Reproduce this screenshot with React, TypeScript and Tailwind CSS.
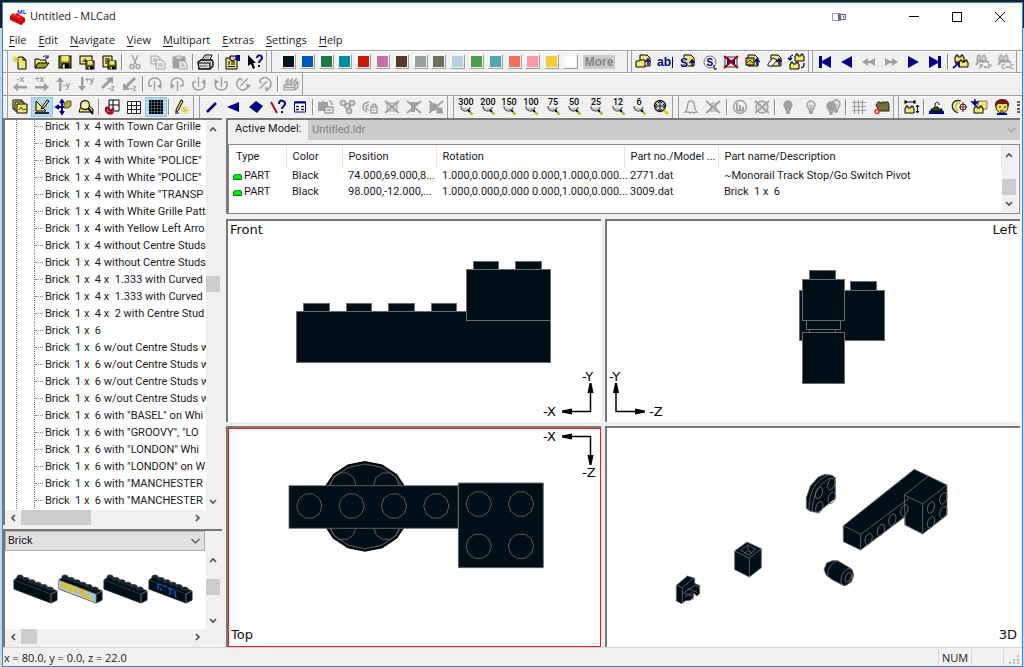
import React from 'react';

const NAVY = '#000080';
const OFF = '#a0a0a0';
const YEL = '#f0e678';
const INK = '#000f17';
const EDGE = '#6a6a6a';

const ring = (cx: number, cy: number, r: number, n: number) =>
  Array.from({ length: n }, (_, i) => {
    const a = (i / n) * Math.PI * 2;
    return `${(cx + r * Math.cos(a)).toFixed(1)},${(cy + r * Math.sin(a)).toFixed(1)}`;
  }).join(' ');

const Sheet = ({ x = 2, y = 2 }: { x?: number; y?: number }) => (
  <path d={`M${x} ${y}h7l3 3v8h-10z`} fill={YEL} stroke="#000" />
);
const Floppy = ({ x = 2, y = 2, s = 12 }: { x?: number; y?: number; s?: number }) => (
  <g>
    <rect x={x} y={y} width={s} height={s} fill="#808000" stroke="#000" />
    <rect x={x + s * 0.2} y={y} width={s * 0.6} height={s * 0.45} fill={YEL} />
    <rect x={x + s * 0.2} y={y + s * 0.6} width={s * 0.65} height={s * 0.4} fill="#000" />
    <rect x={x + s * 0.3} y={y + s * 0.7} width={s * 0.18} height={s * 0.3} fill="#ddd" />
  </g>
);
const Block = ({ x, y, c = YEL, k = '#000' }: { x: number; y: number; c?: string; k?: string }) => (
  <path d={`M${x} ${y + 2}h1v-2h2v2h3v-2h2v2h1v5h-9z`} fill={c} stroke={k} />
);
const Up = ({ x, y }: { x: number; y: number }) => (
  <path d={`M${x} ${y + 7}v-6m-2.5 3l2.5-3 2.5 3`} fill="none" stroke={NAVY} strokeWidth={1.5} />
);
const Cross = ({ c = OFF }: { c?: string }) => (
  <path d="M1 2l14 12M15 2l-14 12" stroke={c} strokeWidth={1.7} />
);
const Arrow = ({ d, t, tx, ty }: { d: string; t: string; tx: number; ty: number }) => (
  <g>
    <path d={d} fill={OFF} />
    <text x={tx} y={ty} fontSize={8} fontWeight={700} fill={OFF}>{t}</text>
  </g>
);
const Orbit = ({ a, flip = false }: { a: number; flip?: boolean }) => (
  <g transform={`rotate(${a} 8 8)`}>
    <g transform={flip ? 'translate(16 0) scale(-1 1)' : undefined} stroke={OFF} fill="none">
      <path d="M2 10C1 4 4 2 8 2s7 3 5 8" strokeWidth={1.5} />
      <path d="M15 8l-1 5-4-3z" fill={OFF} stroke="none" />
      <path d="M2 10h3" strokeWidth={1.5} />
      <path d="M7.500 5v10" strokeWidth={1.4} />
    </g>
  </g>
);
const Bulb = ({ x = 0, y = 0, open = false }: { x?: number; y?: number; open?: boolean }) => (
  <g transform={`translate(${x} ${y})`}>
    <path d="M4 6a4 4 0 0 1 8 0c0 2-2 3-2 5H6c0-2-2-3-2-5z" fill={open ? '#e4e4e4' : OFF} stroke={OFF} strokeWidth={1.4} />
    <path d="M6 12h4v2l-1 1h-2l-1-1z" fill={OFF} />
    {open && <path d="M6 6l2 2 2-2M8 8v4" stroke={OFF} fill="none" />}
  </g>
);
const ZoomNo = ({ n }: { n: string }) => (
  <g>
    <path d="M3 7a4.500 4.500 0 0 0 9 1" fill="#e8e8e8" stroke="#555" strokeWidth={1.2} />
    <path d="M4 10h6" stroke="#999" />
    <path d="M10 11l2 2" stroke="#000" strokeWidth={2} />
    <path d="M12 13l2.500 2.500" stroke="#b5ad00" strokeWidth={2.2} />
    <text x="8" y="6" fontSize={9} fontWeight={500} textAnchor="middle" fill="#000" fontFamily="Roboto">{n}</text>
  </g>
);

const ART: Record<string, React.ReactNode> = {
  fresh: <><path d="M6 3h5l3 3v9H6z" fill={YEL} stroke="#000" /><path d="M11 3v3h3" fill="none" stroke="#000" /><path d="M4 1v8M0 5h8M1 2l6 6M7 2L1 8" stroke="#d6cb20" /></>,
  open: <><path d="M1 14V5h4l1 1h6v3" fill={YEL} stroke="#000" /><path d="M1 14l3-5h11l-4 5z" fill="#a39c2d" stroke="#000" /><path d="M9 3c2-2 4-1 5 1m0-3v3h-3" fill="none" stroke={NAVY} /></>,
  save: <Floppy />,
  savePic: <><rect x="1" y="2" width="12" height="8" fill={YEL} stroke="#000" /><path d="M3 8l3-4 3 4z" fill="#557" /><Floppy x={7} y={7} s={8} /></>,
  saveList: <><path d="M2 2h9v11H2z" fill={YEL} stroke="#000" /><path d="M4 5h5M4 7h4M4 9h2" stroke="#000" /><Floppy x={7} y={7} s={8} /></>,
  cut: <g stroke={OFF} fill="none" strokeWidth={1.4}><path d="M5 1l4 9M11 1l-4 9" /><circle cx="5" cy="12.500" r="2" /><circle cx="11" cy="12.500" r="2" /></g>,
  copy: <g stroke={OFF} fill="#eee"><path d="M1 2h7l2 2v6H1z" /><path d="M6 6h6l3 3v6H6z" /><path d="M3 5h4M3 7h2M8 10h5M8 12h5" /></g>,
  paste: <g stroke={OFF}><path d="M1 3h12v11H1z" fill={OFF} /><path d="M4 2h6v3H4z" fill="#ddd" /><path d="M7 7h5l3 3v5H7z" fill="#eee" /><path d="M9 10h3M9 12h4" /></g>,
  print: <><path d="M4 6l3-5h7l-2 5" fill="#fff" stroke="#000" /><path d="M0 8l3-2h11l1 2v4l-3 3H1z" fill="#d8d8d8" stroke="#000" strokeWidth={1.3} /><path d="M0 9h12v5" stroke="#000" fill="none" strokeWidth={1.2} /><path d="M2 12h7" stroke="#555" /><path d="M9 12h2" stroke="#d6cb20" strokeWidth={1.6} /><path d="M7 3h5M6 5h5" stroke="#555" strokeWidth={0.8} /></>,
  props: <><path d="M1 4h11v11H1z" fill={YEL} stroke="#000" /><path d="M3 8h2M6 8h4M3 10h2M6 10h4M3 12.500h7" stroke="#000" /><path d="M5 2h6v3l-3 2-3-1z" fill="#ccc" stroke="#000" /><path d="M11 1h4v6h-3z" fill={NAVY} /></>,
  help: <><path d="M1 1l8 8H6l2 5-2 1-2-5-3 2z" fill="#000" /><path d="M10 4c0-4 5-3 5 0 0 2-3 2-3 5M12 11v2" stroke={NAVY} strokeWidth={2} fill="none" /></>,
  xm: <Arrow d="M1 11l5-4v3h9v2.500h-9v3z" t="-x" tx={5} ty={6} />,
  xp: <Arrow d="M15 11l-5-4v3H1v2.500h9v3z" t="+x" tx={1} ty={6} />,
  ym: <Arrow d="M4 1l4 5H5.500v9H3V6H0z" t="-y" tx={7} ty={12} />,
  yp: <Arrow d="M4 15l4-5H5.500V1H3v9H0z" t="+y" tx={7} ty={7} />,
  zm: <Arrow d="M13 1v7l-2.500-2L3 13 1 11l7-7-2-2z" t="-z" tx={8} ty={15} />,
  zp: <Arrow d="M1 14V7l2.500 2L12 1l2 2-8 8 2 3z" t="-z" tx={8} ty={15} />,
  r1: <Orbit a={0} />, r2: <Orbit a={0} flip />, r3: <Orbit a={180} flip />, r4: <Orbit a={180} />,
  r5: <Orbit a={225} flip />, r6: <Orbit a={45} />,
  grp: <g stroke={OFF} fill="#ddd" strokeWidth={1.2}><path d="M1 9h11v5H1zM12 9l3-3v5l-3 3M3 9V5l2-2v6M7 9V5l2-2v6M11 8V5l2-2v4M1 11.500h11" /></g>,
  abl: <><text x="-1" y="12" fontSize={12} fontWeight={700} fill={NAVY} fontFamily="Liberation Sans">ab</text><path d="M14.500 3v11" stroke={NAVY} /></>,
  addPart: <><Sheet x={4} y={1} /><path d="M0 7h3l1-1h5v7H0z" fill={YEL} stroke="#000" /><Up x={12} y={4} /></>,
  addS: <><Sheet x={4} y={1} /><text x="0" y="13" fontSize={12} fontWeight={700} fill={NAVY} stroke="#f0f0f0" strokeWidth={1} paintOrder="stroke" fontFamily="Liberation Sans">S</text><Up x={12} y={5} /></>,
  ringS: <><circle cx="8" cy="8" r="6" fill="#eee" stroke="#777" /><text x="4.500" y="12" fontSize={10} fontWeight={700} fill={NAVY} fontFamily="Liberation Sans">S</text><path d="M12 11v4h3" stroke="#000" fill="none" /></>,
  killS: <><rect x="2" y="3" width="12" height="10" fill="#eee" stroke="#333" /><path d="M5 10V5l6 5V5" stroke={NAVY} fill="none" strokeWidth={2} /><Cross c="#a00010" /></>,
  addPic: <><Sheet x={3} y={1} /><rect x="1" y="4" width="8" height="7" fill="#cfc43c" stroke="#000" /><path d="M2 9l3-3 3 3" fill="none" stroke="#333" /><Up x={12} y={4} /></>,
  addClear: <><Sheet x={4} y={1} /><path d="M1 10l5-6 4 2-5 6H1z" fill="#fff" stroke="#222" /><Up x={12} y={4} /></>,
  swap: <><Block x={6} y={0} /><Block x={1} y={8} /><path d="M4 1c-3 1-3 2-3 5M12 14c3-1 3-2 3-5M-1 4l2 2 2-2" stroke={NAVY} fill="none" strokeWidth={1.3} /></>,
  first: <path d="M2 2h3v5l9-5v12l-9-5v5H2z" fill={NAVY} />,
  prev: <path d="M2 8l11-6v12z" fill={NAVY} />,
  rew: <path d="M1 8l6-4v3h2l5-3v8l-5-3H7v3z" fill={OFF} />,
  fwd: <path d="M15 8l-6-4v3H7L2 4v8l5-3h2v3z" fill={OFF} />,
  next: <path d="M14 8L3 2v12z" fill={NAVY} />,
  last: <path d="M14 2h-3v5L2 2v12l9-5v5h3z" fill={NAVY} />,
  tree: <><Block x={2} y={1} /><Block x={6} y={6} /><path d="M0 14l6-5M2 9h4v4" stroke={NAVY} strokeWidth={1.700} fill="none" /></>,
  treeP: <><Block x={2} y={1} c="#ccc" k={OFF} /><path d="M1 11l4-5 4 2M10 6l4 3" stroke={OFF} fill="none" strokeWidth={2} /><text x="4" y="15" fontSize={7} fontWeight={700} fill={OFF}>P=P</text></>,
  treeC: <><Block x={2} y={1} c="#ccc" k={OFF} /><path d="M1 11l4-5 4 2M10 6l4 3" stroke={OFF} fill="none" strokeWidth={2} /><text x="4" y="15" fontSize={7} fontWeight={700} fill={OFF}>C=C</text></>,
  stack: <><path d="M1 1h9v9H1z" fill={YEL} stroke="#000" /><path d="M3 3h9v9H3z" fill={YEL} stroke="#000" /><path d="M5 5h10v9H5z" fill={YEL} stroke="#000" /><path d="M7 11l2-3 2 3 3-1" stroke="#444" fill="none" /></>,
  draw: <><path d="M2 2v10h10z" fill={YEL} stroke="#000" /><path d="M1 14h14" stroke="#000" strokeWidth={1.6} /><path d="M8 8l5-7 2 1-5 7-3 1z" fill={YEL} stroke="#000" /></>,
  move: <><path d="M6 1v14M0 8h13M4 4l2-3 2 3M4 12l2 3 2-3M3 6L0 8l3 2" stroke={NAVY} strokeWidth={1.800} fill="none" /><path d="M8 5l3-3h4v5l-3 2H8z" fill="#b3a92b" stroke="#222" strokeWidth={0.7} /></>,
  zoomPg: <><path d="M3 7l-2 6h14v-3l-4-3z" fill={YEL} stroke="#000" /><circle cx="7" cy="6" r="4.500" fill="#f6efa8" stroke="#222" strokeWidth={1.300} /><path d="M10 9l5 6" stroke="#000" strokeWidth={2} /></>,
  snapA: <><path d="M5 1h10v11H5zM9 1v11M5 6h10" fill="#fff" stroke="#000" /><path d="M3 8l4 4 3-3M3 8c-3 4 3 9 6 5" stroke="#a01020" strokeWidth={2.400} fill="none" /></>,
  grid3: <path d="M1.500 2.500h13v12h-13zM5.500 2v12M10.500 2v12M1 6.500h13M1 10.500h13" fill="#fff" stroke="#222" />,
  grid9: <><path d="M1 1h14v14H1z" fill="#000" /><path d="M3.500 1v14M6.500 1v14M9.500 1v14M12.500 1v14M1 3.500h14M1 6.500h14M1 9.500h14M1 12.500h14" stroke="#667c90" strokeWidth={0.6} /></>,
  wand: <><path d="M2 11L7 1l2 1-5 10-2 1z" fill={YEL} stroke="#000" /><path d="M1 14h4" stroke="#000" /><path d="M11 7v8M7 11h8M8 8l6 6M14 8l-6 6" stroke="#d6cb20" /></>,
  line: <path d="M3 13L12 4" stroke={NAVY} strokeWidth={2.500} />,
  tri: <path d="M1 8l12-5v10z" fill={NAVY} />,
  quad: <path d="M1 8l7-6 7 5-6 7z" fill={NAVY} />,
  opt: <><path d="M1 3l6 11" stroke="#a01020" strokeWidth={2} /><path d="M9 5c0-5 6-4 6 0 0 2-3 2-3 5M12 12v2" stroke={NAVY} strokeWidth={2} fill="none" /></>,
  dlg: <><path d="M2.500 3h11v10h-11z" fill="#fff" stroke={NAVY} /><path d="M2 3.500h12" stroke={NAVY} strokeWidth={2} /><path d="M4 7.500h3M9 7.500h3M4 10.500h3M9 10.500h3" stroke="#222" strokeWidth={1.6} /></>,
  g1: <><path d="M0 3h4l1-2 2 2h3v5H7v4H0z" fill={OFF} /><path d="M7 8h8v6H7zM9 11h4M11 2c3 0 3 2 3 4" stroke={OFF} fill="#eee" strokeWidth={1.4} /></>,
  g2: <g fill="#ddd" stroke={OFF} strokeWidth={1.700}><circle cx="3" cy="4" r="2.500" /><circle cx="12" cy="4" r="2.500" /><circle cx="7.500" cy="7" r="2.500" /><circle cx="9" cy="12" r="2.500" /></g>,
  g3: <g stroke={OFF} strokeWidth={1.500} fill="none"><path d="M7 3c-7 1-8 7-2 10M7 6c-4 1-4 4 0 5M9 8h6v6H9zM10 8c0-4 4-4 4 0M11 11h2" /></g>,
  g4: <><path d="M3 4h10v8H3z" fill="#ddd" stroke={OFF} /><Cross /></>,
  g5: <><path d="M3 3h9v3l-3 2v5H5V7z" fill={OFF} /><Cross /></>,
  g6: <><path d="M2 5h6v6H2zM9 9h5v5H9z" fill={OFF} stroke={OFF} /><Cross /></>,
  z300: <ZoomNo n="300" />, z200: <ZoomNo n="200" />, z150: <ZoomNo n="150" />, z100: <ZoomNo n="100" />,
  z75: <ZoomNo n="75" />, z50: <ZoomNo n="50" />, z25: <ZoomNo n="25" />, z12: <ZoomNo n="12" />, z6: <ZoomNo n="6" />,
  zfit: <><circle cx="7" cy="7" r="5.500" fill="#ccc" stroke="#222" strokeWidth={1.400} /><path d="M7 2v10M2 7h10M5 4l2-2 2 2M5 10l2 2 2-2M4 5L2 7l2 2M10 5l2 2-2 2" stroke="#222" fill="none" /><path d="M11 11l4 4" stroke="#d8d000" strokeWidth={2.500} /></>,
  ghost: <path d="M2 13c3-2 2-6 3-9 1-3 5-3 6 0 1 4 0 7 3 9l-3 1-2-1-2 1-2-1z" fill="#eee" stroke={OFF} strokeWidth={1.400} />,
  ghostX: <><path d="M4 12c2-3 1-6 3-8 4-2 4 4 5 8z" fill="#ddd" stroke={OFF} /><Cross /></>,
  bars: <><circle cx="8" cy="8" r="6.500" fill="#eee" stroke={OFF} strokeWidth={1.400} /><path d="M5 4v8M8 6v6M11 8v4M5 11.500h7" stroke={OFF} strokeWidth={1.800} fill="none" /></>,
  barsX: <><circle cx="8" cy="8" r="6" fill="#ddd" stroke={OFF} strokeWidth={1.400} /><Cross /></>,
  b1: <Bulb />, b2: <Bulb open />, b3: <><Bulb x={3} y={-1} open /><Bulb x={-2} y={1} /></>,
  hash: <path d="M1 3.500h14M1 7.500h14M1 11.500h14M3.500 1v14M7.500 1v14M11.500 1v14" stroke={OFF} strokeWidth={1.200} />,
  brick: <><path d="M2 6l2-3h2v1h2V3h2v1h1V3h3l1 3v6H5z" fill="#776f32" stroke="#222" /><circle cx="3" cy="12.500" r="2" fill="none" stroke="#e22" strokeWidth={1.400} /></>,
  size: <><path d="M2 3h10M2 1v4M12 1v4M4 2L2 3l2 1M10 2l2 1-2 1M14.500 6v8M13 8l1.500-2L16 8M13 12l1.500 2 1.500-2" stroke="#000" fill="none" /><Block x={2} y={7} /></>,
  ship: <><path d="M0 12h15v3H0z" fill={NAVY} /><path d="M2 12v-2h3V8h4v2h4v2z" fill="#0b6b24" stroke="#000" /><path d="M6 7c0-5 4-5 4-1" fill="none" stroke="#000" /></>,
  rot: <><path d="M10 2c-10-3-12 9-3 12" fill="none" stroke="#222" strokeWidth={1.300} /><path d="M9 4c-5 0-6 6-2 8" fill="none" stroke="#d6cb20" strokeWidth={2} /><path d="M8 8h8M12 3v10" stroke="#8b1a2a" /><circle cx="12" cy="8" r="3" fill="none" stroke="#222" /></>,
  imp: <><path d="M6 2h9v8H6z" fill={YEL} stroke="#777" /><path d="M3 0v5M0 3h6l-3 3z" stroke={NAVY} fill={NAVY} strokeWidth={1.4} /><Block x={2} y={7} /></>,
  face: <><circle cx="8" cy="8" r="6" fill="#ecd95a" stroke="#222" /><path d="M1 8C0 1 5 0 9 0s7 3 6 8l-2-3H4z" fill="#6f1818" /><path d="M5 8h2M10 8h2M6 12h4" stroke="#222" /><path d="M3 15h10" stroke={NAVY} strokeWidth={2} /></>,
  more: <path d="M1 3h3M1 6h3M1 10h3M1 13h3" stroke="#333" strokeWidth={1.500} />,
};

const Icon = ({ name }: { name: string }) => (
  <svg viewBox="0 0 16 16" className="h-4 w-4 shrink-0 overflow-visible" aria-hidden="true">{ART[name]}</svg>
);

type Item = string | null;

function Tools({ items, label, active = [] }: { items: Item[]; label: string; active?: string[] }) {
  return (
    <div role="toolbar" aria-label={label} className="flex h-full w-full items-center">
      {items.map((it, i) =>
        it === null ? (
          <span key={i} className="mx-px h-4 w-[2px] shrink-0 border-l border-[#8c8c8c] bg-white" />
        ) : (
          <button
            key={i}
            aria-label={it}
            className={
              active.includes(it)
                ? 'flex h-5 min-w-0 flex-1 items-center justify-center bg-[#b5d7f0] outline outline-1 -outline-offset-1 outline-[#90c8f6]'
                : 'flex h-5 min-w-0 flex-1 items-center justify-center'
            }
          >
            <Icon name={it} />
          </button>
        ),
      )}
    </div>
  );
}

const BAR = 'flex shrink-0 items-center border-x border-l-[#a0a0a0] border-r-[#a0a0a0] pl-px';
const ROW = 'flex shrink-0 overflow-hidden border-t border-[#a0a0a0] shadow-[inset_0_1px_0_#fff]';

const SWATCHES = [
  ['Black', '#05131d'], ['Blue', '#0055bf'], ['Green', '#237841'], ['Teal', '#008f9b'], ['Red', '#c91a09'],
  ['Dark pink', '#c870a0'], ['Brown', '#583927'], ['Light gray', '#9ba19d'], ['Dark gray', '#6d6e5c'],
  ['Light blue', '#b4d2e3'], ['Bright green', '#4b9f4a'], ['Turquoise', '#55a5af'], ['Salmon', '#f2705e'],
  ['Pink', '#fc97ac'], ['Yellow', '#f2cd37'], ['White', '#ffffff'],
];

const PARTS = [
  'Brick  1 x  4 with Town Car Grille', 'Brick  1 x  4 with Town Car Grille', 'Brick  1 x  4 with White "POLICE"',
  'Brick  1 x  4 with White "POLICE"', 'Brick  1 x  4 with White "TRANSP', 'Brick  1 x  4 with White Grille Patt',
  'Brick  1 x  4 with Yellow Left Arro', 'Brick  1 x  4 without Centre Studs', 'Brick  1 x  4 without Centre Studs',
  'Brick  1 x  4 x  1.333 with Curved', 'Brick  1 x  4 x  1.333 with Curved', 'Brick  1 x  4 x  2 with Centre Stud',
  'Brick  1 x  6', 'Brick  1 x  6 w/out Centre Studs w', 'Brick  1 x  6 w/out Centre Studs w',
  'Brick  1 x  6 w/out Centre Studs w', 'Brick  1 x  6 w/out Centre Studs w', 'Brick  1 x  6 with "BASEL" on Whi',
  'Brick  1 x  6 with "GROOVY", "LO', 'Brick  1 x  6 with "LONDON" Whi', 'Brick  1 x  6 with "LONDON" on W',
  'Brick  1 x  6 with "MANCHESTER', 'Brick  1 x  6 with "MANCHESTER',
];

function Chevron({ dir, tone = '#505050' }: { dir: 'up' | 'down' | 'left' | 'right'; tone?: string }) {
  const d = { up: 'M1 6l3-3 3 3', down: 'M1 2l3 3 3-3', left: 'M6 1l-3 3 3 3', right: 'M2 1l3 3-3 3' }[dir];
  return (
    <svg viewBox="0 0 8 8" className="h-2 w-2 shrink-0" aria-hidden="true">
      <path d={d} fill="none" stroke={tone} strokeWidth={1.6} />
    </svg>
  );
}

const Drop = ({ tone = '#505050' }: { tone?: string }) => (
  <svg viewBox="0 0 9 6" className="h-[6px] w-[9px]" aria-hidden="true">
    <path d="M.5 1l4 4 4-4" fill="none" stroke={tone} strokeWidth={1.1} />
  </svg>
);

function VScroll({ thumb }: { thumb: string }) {
  return (
    <div className="flex w-4 shrink-0 flex-col bg-[#f0f0f0] pr-[2px]">
      <button aria-label="Scroll up" className="flex h-[17px] shrink-0 items-center justify-center"><Chevron dir="up" /></button>
      <div className="relative flex-1"><div className={`absolute inset-x-0 bg-[#cdcdcd] ${thumb}`} /></div>
      <button aria-label="Scroll down" className="flex h-[17px] shrink-0 items-center justify-center"><Chevron dir="down" /></button>
    </div>
  );
}

function HScroll({ thumb }: { thumb: string }) {
  return (
    <div className="mr-4 flex h-[15px] shrink-0 bg-[#f0f0f0]">
      <button aria-label="Scroll left" className="flex w-4 items-center justify-center"><Chevron dir="left" /></button>
      <div className="flex-1"><div className={`h-full bg-[#cdcdcd] ${thumb}`} /></div>
      <button aria-label="Scroll right" className="flex w-4 items-center justify-center"><Chevron dir="right" /></button>
    </div>
  );
}

function Thumb({ kind }: { kind: 'plain' | 'hotel' | 'blue' }) {
  return (
    <svg viewBox="0 0 45 30" className="h-[30px] w-[45px]" aria-hidden="true">
      <path d="M1 6l6-4 37 15v9l-6 3L1 15z" fill={INK} stroke="#1c262b" />
      {kind === 'hotel' && <path d="M1 6l37 14v9L1 15z" fill="#a9c4d0" />}
      {[6, 12, 18, 24, 30, 36].map((x, i) => (
        <path key={x} d={`M${x - 2} ${4 + i * 2.4}v-2l2-1h2l2 1v3`} fill="#1b252b" stroke="#39444a" strokeWidth={0.7} />
      ))}
      <path d="M38 20v9M38 20l6-3" fill="none" stroke="#888" strokeWidth={0.8} />
      <path d="M1 6l37 14" fill="none" stroke="#4a5358" strokeWidth={0.6} />
      {kind === 'hotel' && <path d="M4 8v6M7 9v6M4 11l3 1M10 11v5l4 1v-5zM16 13l5 2M18 14v5M23 16v5l4 1M23 16l4 1M23 18l3 1M29 19v5l5 2" stroke="#dfc02e" strokeWidth={2.2} fill="none" />}
      {kind === 'blue' && <path d="M10 10l4 1M10 10v6M15 11l3 2M13 14v3M20 14l5 2M22 15v6M27 17v5l2 1" stroke="#0a4fae" strokeWidth={1.700} fill="none" />}
    </svg>
  );
}

const GreenPart = () => (
  <svg viewBox="0 0 9 7" className="h-[7px] w-[9px] shrink-0" aria-hidden="true">
    <path d="M.5 2.500l1-1h2l.5.500h1l.5-.500h2l1 1v4h-8z" fill="#00f000" stroke="#073" />
  </svg>
);

function View({ name, corner, box, selected = false, children }: {
  name: string; corner: string; box: string; selected?: boolean; children: React.ReactNode;
}) {
  return (
    <section
      aria-label={name}
      className={
        selected
          ? 'relative min-h-0 min-w-0 overflow-hidden border-l-2 border-t-2 border-[#787878] bg-white shadow-[inset_0_0_0_1px_#f01818]'
          : 'relative min-h-0 min-w-0 overflow-hidden border-l-2 border-t-2 border-[#787878] bg-white'
      }
    >
      <svg viewBox={box} className="h-full w-full" aria-hidden="true" fontFamily="DejaVu Sans, sans-serif" fontSize={13}>
        {children}
      </svg>
      <span className={`absolute font-['DejaVu_Sans',sans-serif] text-[13px] leading-4 text-[#111] ${corner}`}>{name}</span>
    </section>
  );
}

const Tip = ({ x, y, a }: { x: number; y: number; a: number }) => (
  <path d="M-1 0l-2 10h6l-2-10z" transform={`translate(${x} ${y}) rotate(${a})`} fill="#000" />
);
const Rects = ({ list }: { list: number[][] }) => (
  <g fill={INK} stroke={EDGE} shapeRendering="crispEdges">
    {list.map(([x, y, x2, y2], i) => <rect key={i} x={x + 0.5} y={y + 0.5} width={x2 - x - 1} height={y2 - y - 1} />)}
  </g>
);

function FrontView() {
  return (
    <View name="Front" corner="left-[2px] top-px" box="228 221 373 201">
      <Rects list={[[303, 303, 330, 313], [346, 303, 372, 313], [388, 303, 415, 313], [431, 303, 457, 313], [473, 261, 499, 271], [515, 261, 542, 271], [296, 311, 551, 363], [466, 269, 551, 321]]} />
      <path d="M590.5 386v25.500h-25" fill="none" stroke="#000" strokeWidth={1.5} />
      <Tip x={590.5} y={383} a={0} /><Tip x={562} y={411.5} a={-90} />
      <text x="582" y="381">-Y</text><text x="543" y="416">-X</text>
    </View>
  );
}

function LeftView() {
  return (
    <View name="Left" corner="right-[3px] top-px" box="607 221 413 201">
      <Rects list={[[850, 281, 877, 291], [799, 290, 885, 341], [809, 270, 836, 281], [802, 279, 845, 321], [806, 320, 841, 330], [809, 329, 836, 333], [802, 332, 845, 384]]} />
      <path d="M616 386v25.500h26" fill="none" stroke="#000" strokeWidth={1.5} />
      <Tip x={616} y={383} a={0} /><Tip x={645} y={411.5} a={90} />
      <text x="609" y="381">-Y</text><text x="649" y="416">-Z</text>
    </View>
  );
}

function TopView() {
  return (
    <View name="Top" corner="bottom-1 left-[3px]" box="228 428 373 219" selected>
      <g transform="translate(225 425) scale(.33333)" stroke={EDGE} strokeWidth={2.5}>
        <polygon points={ring(420, 244, 134, 16)} fill={INK} stroke="#000" strokeWidth={4} />
        <g fill="none">
          <polygon points={ring(420, 244, 127, 16)} />
          {[[355, 180], [484, 180], [355, 307], [484, 307]].map(([x, y]) => <polygon key={`${x}-${y}`} points={ring(x, y, 38, 10)} />)}
        </g>
        <path d="M192 182h508v128h-508zM700 174h255v254h-255z" fill={INK} />
        <g fill="none">
          {[[253, 243], [380, 243], [507, 243], [634, 243], [761, 237], [888, 237], [761, 364], [888, 364]].map(([x, y]) => (
            <polygon key={`${x}-${y}`} points={ring(x, y, 38, 10)} />
          ))}
        </g>
      </g>
      <path d="M565 436.500h25.500v26" fill="none" stroke="#000" strokeWidth={1.5} />
      <Tip x={562} y={436.5} a={-90} /><Tip x={590.5} y={465} a={180} />
      <text x="543" y="441">-X</text><text x="582" y="477">-Z</text>
    </View>
  );
}

function SolidView() {
  return (
    <View name="3D" corner="bottom-1 right-[3px]" box="607 428 413 219">
      <g transform="translate(605 425) scale(.33333)" stroke={EDGE} strokeWidth={2.5} strokeLinejoin="round" fill={INK}>
        <path d="M928 133L715 302v48l52 25 133-100v25l53 27 73-57v-90l-56-27z" />
        <g fill="none">
          <path d="M715 302l52 26v47M767 328l145-108M898 210l55 26 73-56M898 210l72-57M953 236v91M898 210l2 90" />
          {[[791, 342], [828, 315], [862, 284], [898, 256], [978, 247], [1015, 220], [978, 292], [1015, 262]].map(([x, y]) => (
            <ellipse key={x + '-' + y} cx={x} cy={y} rx={10} ry={18} transform={`rotate(18 ${x} ${y})`} />
          ))}
        </g>
        <path d="M660 148l-20 8-24 27-12 35v32l10 8 24 5 53-43v-62l-10-7z" />
        <path d="M668 151c-38 14-57 55-56 104M678 158c-38 17-56 55-57 104" fill="none" />
        <g fill="none">
          {[[642, 204], [679, 177], [643, 247], [680, 219]].map(([x, y]) => <ellipse key={x + '-' + y} cx={x} cy={y} rx={10} ry={18} transform={`rotate(18 ${x} ${y})`} />)}
        </g>
        <path d="M426 351l-37 27v56l44 22 36-28v-57z" />
        <path d="M389 378l44 21 36-28M433 399v57M407 376l22-16 24 13-22 17zM429 360v17l-10 7M429 377l12 6" fill="none" />
        <path d="M682 407h16l42 25 6 18-7 22-23 10-34-18-18-13-7-17 8-20z" />
        <path d="M698 408c-18 2-32 23-30 46" fill="none" />
        <ellipse cx="726" cy="456" rx="16" ry="27" transform="rotate(24 726 456)" />
        <ellipse cx="730" cy="457" rx="8" ry="15" transform="rotate(24 730 457)" />
        <path d="M247 453l-33 28v47l16 8 12-9 14-1 10-9v-12l10 8 8-7v-24l-15-7v-15z" />
        <path d="M214 481l18 7 36-29M232 488v47M236 503l34-22 13 8M236 503l28 10v12M247 490l30 12M240 515l22-12" fill="none" />
      </g>
    </View>
  );
}

const MENU = ['File', 'Edit', 'Navigate', 'View', 'Multipart', 'Extras', 'Settings', 'Help'];
const COLS = ['Type', 'Color', 'Position', 'Rotation', 'Part no./Model ...', 'Part name/Description'];
const ROWS = [
  ['PART', 'Black', '74.000,69.000,8...', '1.000,0.000,0.000 0.000,1.000,0.000...', '2771.dat', '~Monorail Track Stop/Go Switch Pivot'],
  ['PART', 'Black', '98.000,-12.000,...', '1.000,0.000,0.000 0.000,1.000,0.000...', '3009.dat', 'Brick  1 x  6'],
];

export default function App() {
  return (
    <div className="flex h-screen flex-col bg-[linear-gradient(#1c2024_28px,#d2d5d8_28px)] pl-[2px] pr-px pt-[2px] font-['Open_Sans','Noto_Sans',sans-serif] text-[11px] text-[#1a1a1a]">
      <main className="flex min-h-0 flex-1 flex-col overflow-hidden border border-[#2a8ad8] bg-[#f0f0f0]">
        <header className="shrink-0 bg-white">
          <div className="flex h-7 items-center pb-px pl-[7px] pr-px">
            <svg viewBox="0 0 17 16" className="h-4 w-[17px]" aria-hidden="true">
              <text x="7" y="5" fontSize={6} fontWeight={700} fill="#2020d0">ML</text>
              <path d="M0 7l3-3 2 1 2-1 3 2 5 3v4l-4 3L0 11z" fill="#e01010" />
              <path d="M0 8l11 5 4-3M11 13v3" stroke="#900" fill="none" />
              <path d="M3 6h3M7 8h3" stroke="#ff6a6a" />
            </svg>
            <h1 className="ml-[3px] flex-1 font-normal">Untitled - MLCad</h1>
            <svg viewBox="0 0 14 10" className="mr-[46px] h-[10px] w-[14px]" aria-hidden="true">
              <path d="M.5 1.500h8v7h-8z" fill="#fff" stroke="#99a" />
              <path d="M6 1.500h2.500v7H6z" fill="#667" />
              <path d="M8.500 2.500h5v5h-5z" fill="#eee" stroke="#667" />
              <path d="M11 5h1" stroke="#334" strokeWidth={1.500} />
            </svg>
            <button aria-label="Minimize" className="flex w-[43px] justify-center"><span className="h-px w-[10px] bg-black" /></button>
            <button aria-label="Maximize" className="flex w-[43px] justify-center"><span className="h-[10px] w-[10px] border border-black" /></button>
            <button aria-label="Close" className="flex w-[43px] justify-center">
              <svg viewBox="0 0 10 10" className="h-[10px] w-[10px]"><path d="M0 0l10 10M10 0L0 10" stroke="#111" /></svg>
            </button>
          </div>
          <nav aria-label="Menu" className="flex h-[19px] items-center gap-3 pb-[2px] pl-[6px]">
            {MENU.map((m) => (
              <button key={m} className="leading-4">
                <span className="underline underline-offset-2">{m[0]}</span>{m.slice(1)}
              </button>
            ))}
          </nav>
        </header>

        <div className={`${ROW} h-[22px] pl-1`}>
          <div className={`${BAR} mr-1 w-[260px]`}>
            <Tools label="Standard" items={['fresh', 'open', 'save', 'savePic', 'saveList', null, 'cut', 'copy', 'paste', null, 'print', null, 'props', 'help']} />
          </div>
          <div className={`${BAR} mr-[3px] w-[357px]`}>
            <div className="ml-[6px] flex w-[301px] items-center">
              {SWATCHES.map(([n, c]) => (
                <span key={n} className="flex flex-1 justify-center">
                  <button aria-label={n} className="h-[15px] w-[15px] border border-[#a0a0a0] border-l-white border-t-white p-px">
                    <span className="block h-full w-full" style={{ backgroundColor: c }} />
                  </button>
                </span>
              ))}
            </div>
            <button className="ml-[3px] h-[14px] w-8 bg-[#cbcbcb] font-['Liberation_Sans',sans-serif] text-[12px] font-bold leading-[14px] text-[#858585]">More</button>
          </div>
          <div className={`${BAR} mr-[3px] w-[178px]`}>
            <Tools label="Elements" items={['addPart', 'abl', 'addS', 'ringS', 'killS', 'addPic', 'addClear', 'swap']} />
          </div>
          <div className={`${BAR} w-[205px]`}>
            <Tools label="Steps" items={['first', 'prev', 'rew', 'fwd', 'next', 'last', null, 'tree', 'treeP', 'treeC']} />
          </div>
        </div>
        <div className={`${ROW} h-[23px] pl-1`}>
          <div className={`${BAR} w-[296px]`}>
            <Tools label="Movement" items={['xm', 'xp', 'ym', 'yp', 'zm', 'zp', null, 'r1', 'r2', 'r3', 'r4', 'r5', 'r6', null, 'grp']} />
          </div>
        </div>
        <div className={`${ROW} h-[23px] pl-1`}>
          <div className={`${BAR} mr-[5px] w-[187px]`}>
            <Tools label="Mode" active={['draw', 'grid9']} items={['stack', 'draw', 'move', 'zoomPg', null, 'snapA', 'grid3', 'grid9', null, 'wand']} />
          </div>
          <div className={`${BAR} mr-[5px] w-[249px]`}>
            <Tools label="Primitives" items={['line', 'tri', 'quad', 'opt', 'dlg', null, 'g1', 'g2', 'g3', 'g4', 'g5', 'g6']} />
          </div>
          <div className={`${BAR} mr-[5px] w-[220px]`}>
            <Tools label="Zoom" items={['z300', 'z200', 'z150', 'z100', 'z75', 'z50', 'z25', 'z12', 'z6', 'zfit']} />
          </div>
          <div className={`${BAR} mr-1 w-[216px]`}>
            <Tools label="Visibility" items={['ghost', 'ghostX', null, 'bars', 'barsX', null, 'b1', 'b2', 'b3', null, 'hash', 'brick']} />
          </div>
          <div className={`${BAR} w-[138px]`}>
            <Tools label="Extras" items={['size', null, 'ship', 'rot', 'imp', 'face', 'more']} />
          </div>
        </div>

        <div className="flex min-h-0 flex-1 gap-1 pr-[2px]">
          <aside className="flex w-[219px] shrink-0 flex-col">
            <div className="flex min-h-0 flex-1 flex-col border-l-2 border-t-2 border-[#787878]">
              <div className="flex min-h-0 flex-1">
                <div className="min-w-0 flex-1 overflow-hidden bg-white pl-[11px]">
                  <ul className="-mt-[2px] border-l border-dotted border-[#808080] font-['Roboto','Open_Sans',sans-serif]">
                    {PARTS.map((p, i) => (
                      <li key={i} className="ml-[17px] flex h-[17px] items-center border-l border-dotted border-[#808080]">
                        <span className="mr-[2px] w-2 shrink-0 border-t border-dotted border-[#808080]" />
                        <span className="whitespace-pre leading-[17px]">{p}</span>
                      </li>
                    ))}
                  </ul>
                </div>
                <VScroll thumb="top-[39%] h-4" />
              </div>
              <HScroll thumb="w-[70px]" />
            </div>
            <div className="mt-1 flex h-[118px] shrink-0 flex-col border-l-2 border-t-2 border-[#787878]">
              <div className="relative h-5 w-[200px] shrink-0 border border-[#adadad] bg-[#e1e1e1]">
                <select aria-label="Part group" className="h-full w-full appearance-none bg-transparent pl-[2px] font-['Roboto',sans-serif] text-[11px] outline-none">
                  <option>Brick</option>
                </select>
                <span className="pointer-events-none absolute inset-y-0 right-1 flex items-center"><Drop /></span>
              </div>
              <div className="flex min-h-0 flex-1">
                <div className="flex flex-1 bg-white pl-2 pt-[23px]">
                  <Thumb kind="plain" /><Thumb kind="hotel" /><Thumb kind="plain" /><Thumb kind="blue" />
                </div>
                <VScroll thumb="top-[11px] h-4" />
              </div>
              <HScroll thumb="w-4" />
              <div className="h-[3px] shrink-0" />
            </div>
          </aside>

          <div className="flex min-w-0 flex-1 flex-col font-['Roboto','Liberation_Sans',sans-serif] text-[11px]">
            <div className="flex h-[96px] shrink-0 flex-col border-l-2 border-t-2 border-[#787878]">
              <div className="flex h-5 shrink-0 items-stretch">
                <label htmlFor="model" className="w-20 pl-[7px] leading-[18px]">Active Model:</label>
                <div className="relative flex-1 bg-[#cccccc]">
                  <select id="model" disabled className="h-full w-full appearance-none bg-transparent pl-1 text-[#838383] opacity-100 outline-none">
                    <option>Untitled.ldr</option>
                  </select>
                  <span className="pointer-events-none absolute inset-y-0 right-1 flex items-center"><Drop tone="#a5a5a5" /></span>
                </div>
              </div>
              <div className="mt-1 flex min-h-0 flex-1 border border-[#828790] bg-white p-px">
                <div className="min-w-0 flex-1 overflow-hidden">
                  <table className="w-full table-fixed border-collapse text-left">
                    <colgroup>
                      <col className="w-[56px]" /><col className="w-[56px]" /><col className="w-[94px]" />
                      <col className="w-[188px]" /><col className="w-[94px]" /><col />
                    </colgroup>
                    <thead>
                      <tr className="h-[22px]">
                        {COLS.map((c) => (
                          <th key={c} className="whitespace-nowrap border-r border-[#e5e5e5] pl-[6px] font-normal">{c}</th>
                        ))}
                      </tr>
                    </thead>
                    <tbody>
                      {ROWS.map((r, i) => (
                        <tr key={i} className="h-4">
                          {r.map((c, j) => (
                            <td key={j} className={j === 0 ? 'p-0 pl-[3px] leading-4' : 'whitespace-pre p-0 pl-[6px] leading-4'}>
                              {j === 0 ? <span className="flex items-center gap-[2px]"><GreenPart />{c}</span> : c}
                            </td>
                          ))}
                        </tr>
                      ))}
                    </tbody>
                  </table>
                </div>
                <VScroll thumb="bottom-0 h-4" />
              </div>
            </div>
            <div className="mt-[5px] grid min-h-0 flex-1 grid-cols-[375fr_415fr] grid-rows-[203fr_221fr] gap-1">
              <FrontView />
              <LeftView />
              <TopView />
              <SolidView />
            </div>
          </div>
        </div>

        <footer className="flex h-[19px] shrink-0 items-stretch border-t border-[#d7d7d7] leading-[18px]">
          <span className="flex-1 pl-px pt-px">x = 80.0, y = 0.0, z = 22.0</span>
          <span className="my-px w-[34px] border-x border-[#d7d7d7] text-center leading-[18px]">NUM</span>
          <span className="my-px w-8 border-r border-[#d7d7d7]" />
          <svg viewBox="0 0 18 17" className="h-[17px] w-[18px]" aria-hidden="true">
            <path d="M13 7h2v2h-2zM13 11h2v2h-2zM9 11h2v2H9zM13 14h2v2h-2zM9 14h2v2H9zM5 14h2v2H5z" fill="#bbb" />
          </svg>
        </footer>
      </main>
    </div>
  );
}
